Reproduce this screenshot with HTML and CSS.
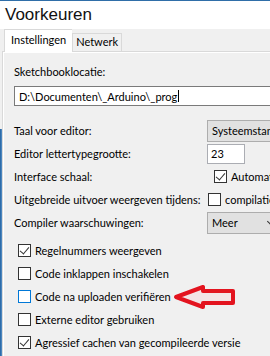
FILE: index.html
```html
<!DOCTYPE html>
<html>
   <head>
      <meta charset="UTF-8">
      <title>Voorkeuren</title>
      <link rel="stylesheet" href="styles.css">
   </head>
   <body>
      <div class="window">
         <div class="titlebar">Voorkeuren</div>

         <div class="tabs">
            <div class="tab active">Instellingen</div>
            <div class="tab">Netwerk</div>
         </div>

         <div class="pane">
            <div class="field-label">Sketchbooklocatie:</div>
            <div class="path-input">D:\Documenten\_Arduino\_prog<span class="caret"></span></div>

            <div class="rows">
               <div class="row">
                  <span class="label">Taal voor editor:</span>
                  <span class="combo wide">Systeemstandaard</span>
               </div>
               <div class="row">
                  <span class="label">Editor lettertypegrootte:</span>
                  <span class="num-input">23</span>
               </div>
               <div class="row">
                  <span class="label">Interface schaal:</span>
                  <span class="check-inline indent"><span class="box checked"></span>Automatisch</span>
               </div>
               <div class="row">
                  <span class="label">Uitgebreide uitvoer weergeven tijdens:</span>
                  <span class="check-inline tight"><span class="box"></span>compilatie</span>
               </div>
               <div class="row">
                  <span class="label">Compiler waarschuwingen:</span>
                  <span class="combo">Meer<span class="chevron"></span></span>
               </div>
            </div>

            <div class="checks">
               <div class="check"><span class="box checked"></span>Regelnummers weergeven</div>
               <div class="check"><span class="box"></span>Code inklappen inschakelen</div>
               <div class="check"><span class="box hover"></span>Code na uploaden verifiëren</div>
               <div class="check"><span class="box"></span>Externe editor gebruiken</div>
               <div class="check"><span class="box checked"></span>Agressief cachen van gecompileerde versie</div>
            </div>
         </div>

         <div class="edge"></div>

         <!-- red annotation arrow -->
         <svg class="arrow" width="70" height="28" viewBox="0 0 70 28">
            <polygon points="4,13 31,3 31,7 61,7 61,19 31,19 31,23" fill="#f3e4e6" stroke="#e3141f" stroke-width="4" stroke-linejoin="round"/>
         </svg>
      </div>
   </body>
</html>
```

FILE: styles.css
```css
*
{
   box-sizing: border-box;
}

body
{
   margin: 0;
   width: 270px;
   height: 356px;
   overflow: hidden;
   font-family: Lato, "Liberation Sans", sans-serif;
   font-size: 11px;
   color: #000000;
   background: #f0f0f0;
}

.window
{
   position: relative;
   height: 356px;
   border-top: 1px solid #2f6ea8;
}

.titlebar
{
   height: 28px;
   padding: 3px 0 0 5px;
   background: #ffffff;
   font-family: "Liberation Sans", sans-serif;
   font-size: 17px;
   line-height: 22px;
   color: #111111;
}

.tabs
{
   display: flex;
   align-items: flex-end;
   height: 22px;
   padding-left: 4px;
}

.tab
{
   height: 18px;
   padding: 0 3px;
   line-height: 16px;
   border: 1px solid #d9d9d9;
   border-bottom: none;
   background: #f0f0f0;
}

.tab.active
{
   position: relative;
   z-index: 1;
   height: 23px;
   margin-bottom: -1px;
   padding: 0 6px;
   line-height: 20px;
   background: #ffffff;
   border-right: none;
}

.pane
{
   margin-left: 2px;
   height: 305px;
   padding: 12px 0 0 11px;
   border-top: 1px solid #d9d9d9;
   border-left: 1px solid #d9d9d9;
   box-shadow: inset 1px 1px 0 #ffffff;
}

.field-label
{
   height: 16px;
   line-height: 16px;
}

.path-input
{
   display: flex;
   align-items: center;
   height: 20px;
   margin: 6px -20px 0 0;
   padding-left: 4px;
   background: #ffffff;
   border: 1px solid #7a7a7a;
}

.caret
{
   width: 1px;
   height: 12px;
   margin-left: 1px;
   background: #000000;
}

.rows
{
   margin-top: 13px;
}

.row
{
   display: flex;
   align-items: center;
   height: 23px;
}

.label
{
   flex: 0 0 auto;
   white-space: nowrap;
}

.row .label
{
   width: 193px;
}

.combo
{
   position: relative;
   display: flex;
   align-items: center;
   flex: 0 0 70px;
   height: 22px;
   padding-left: 4px;
   overflow: hidden;
   white-space: nowrap;
   background: #e1e1e1;
   border: 1px solid #adadad;
}

.combo.wide
{
   flex-basis: 130px;
}

.chevron
{
   position: absolute;
   left: 60px;
   top: 6px;
   width: 5px;
   height: 5px;
   border-right: 1px solid #333333;
   border-bottom: 1px solid #333333;
   transform: rotate(45deg);
}

.num-input
{
   display: flex;
   align-items: center;
   width: 38px;
   height: 20px;
   padding-left: 3px;
   background: #ffffff;
   border: 1px solid #abadb3;
}

.check-inline
{
   display: flex;
   align-items: center;
   white-space: nowrap;
}

.check-inline.indent
{
   margin-left: 7px;
}

.check-inline.tight
{
   margin-left: 1px;
}

.checks
{
   margin-top: 5px;
   padding-left: 4px;
}

.check
{
   display: flex;
   align-items: center;
   height: 23px;
   white-space: nowrap;
}

.box
{
   position: relative;
   flex: 0 0 13px;
   width: 13px;
   height: 13px;
   margin-right: 4px;
   background: #ffffff;
   border: 1px solid #333333;
}

.box.hover
{
   border-color: #0078d7;
}

.box.checked::after
{
   content: "";
   position: absolute;
   left: 3px;
   top: 0;
   width: 4px;
   height: 8px;
   border-right: 1px solid #333333;
   border-bottom: 1px solid #333333;
   transform: rotate(40deg);
}

.edge
{
   position: absolute;
   left: 0;
   top: 128px;
   bottom: 0;
   width: 2px;
   background: linear-gradient(to right, #1f5f9f, #5b93c8);
}

.arrow
{
   position: absolute;
   left: 172px;
   top: 283px;
}
```
